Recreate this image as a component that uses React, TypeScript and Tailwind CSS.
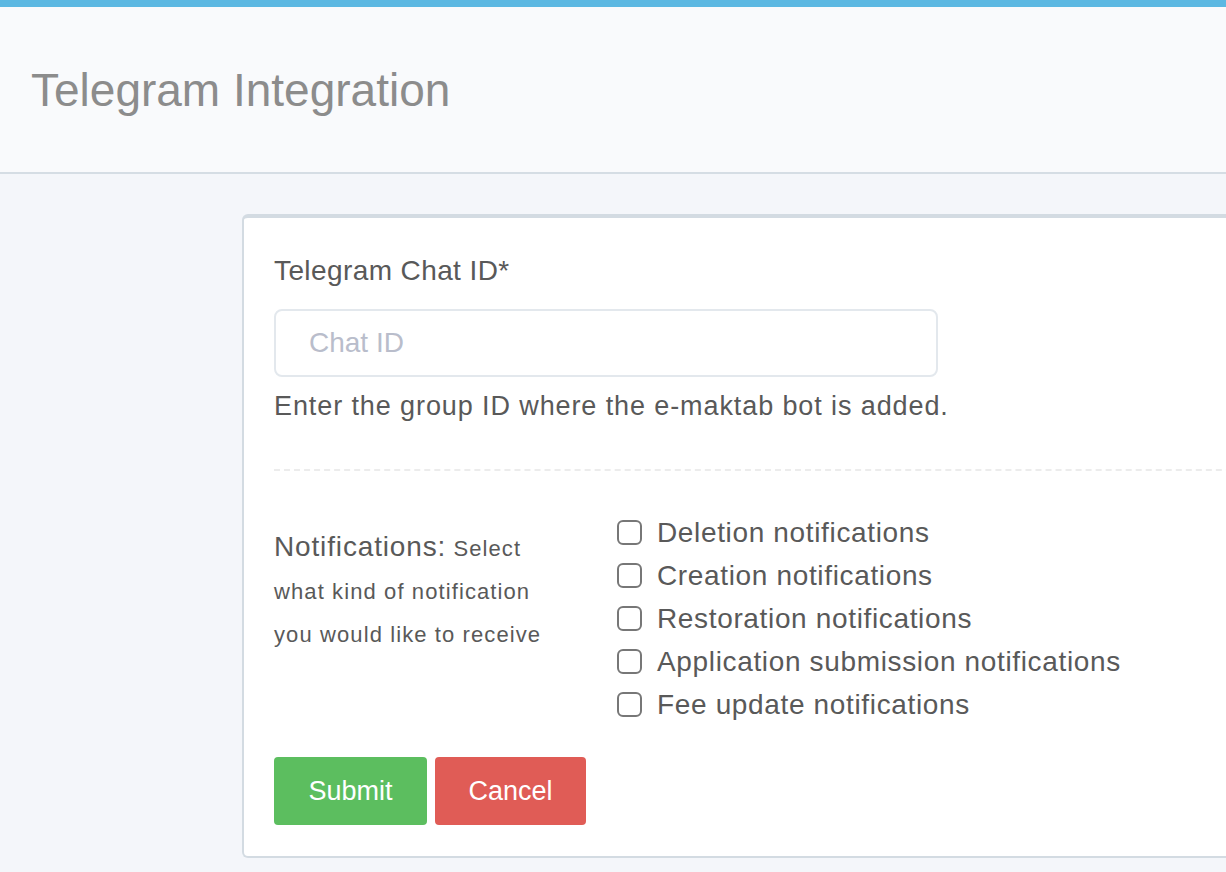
import React from "react";

const items = [
  "Deletion notifications",
  "Creation notifications",
  "Restoration notifications",
  "Application submission notifications",
  "Fee update notifications",
];

export default function App() {
  return (
    <div
      className="min-h-[872px] w-full overflow-hidden bg-[#f4f6fa] text-[#595959]"
      style={{ fontFamily: '"Liberation Sans", Arial, sans-serif' }}
    >
      <div className="h-[7px] bg-[#5cb8e2]" />
      <header className="flex h-[167px] items-center border-b-2 border-[#d5dde4] bg-[#f9fafc] pl-[31px]">
        <h1 className="text-[46px] leading-none text-[#8c8c8c]">Telegram Integration</h1>
      </header>
      <main className="pl-[242px] pt-[40px]">
        <div className="w-[1100px] rounded-md border-b-2 border-l-2 border-t-4 border-[#d3dbe2] bg-white pb-[31px] pl-[30px] pr-[40px] pt-[35px]">
          <label className="block text-[28px] leading-[36px] tracking-[0.4px]">Telegram Chat ID*</label>
          <input
            className="mt-[20px] block h-[68px] w-[664px] rounded-lg border-2 border-[#e3e8ed] bg-white pl-[33px] text-[28px] text-[#595959] outline-none placeholder:text-[#b9bdcb]"
            placeholder="Chat ID"
          />
          <p className="mt-[11px] text-[27px] leading-[36px] tracking-[0.9px]">
            Enter the group ID where the e-maktab bot is added.
          </p>
          <div className="mt-[45px] border-t-2 border-dashed border-[#ececec]" />
          <div className="mt-[40px] flex">
            <div className="mt-[16px] w-[300px] text-[22px] leading-[43px] tracking-[1.1px]">
              <span className="text-[28px] leading-none tracking-[0.85px]">Notifications:</span>{" "}
              <span>
                Select
                <br />
                what kind of notification
                <br />
                you would like to receive
              </span>
            </div>
            <div className="ml-[43px] flex flex-col">
              {items.map((t) => (
                <label key={t} className="flex h-[43px] items-center">
                  <span className="mr-[15px] block h-[25px] w-[25px] shrink-0 rounded-[6px] border-2 border-[#777777] bg-white" />
                  <span className="text-[28px] tracking-[0.65px]">{t}</span>
                </label>
              ))}
            </div>
          </div>
          <div className="mt-[31px] flex gap-[8px]">
            <button className="h-[68px] w-[153px] rounded-[4px] bg-[#5cbe5f] text-[27px] text-white">
              Submit
            </button>
            <button className="h-[68px] w-[151px] rounded-[4px] bg-[#e05c56] text-[27px] text-white">
              Cancel
            </button>
          </div>
        </div>
      </main>
    </div>
  );
}
